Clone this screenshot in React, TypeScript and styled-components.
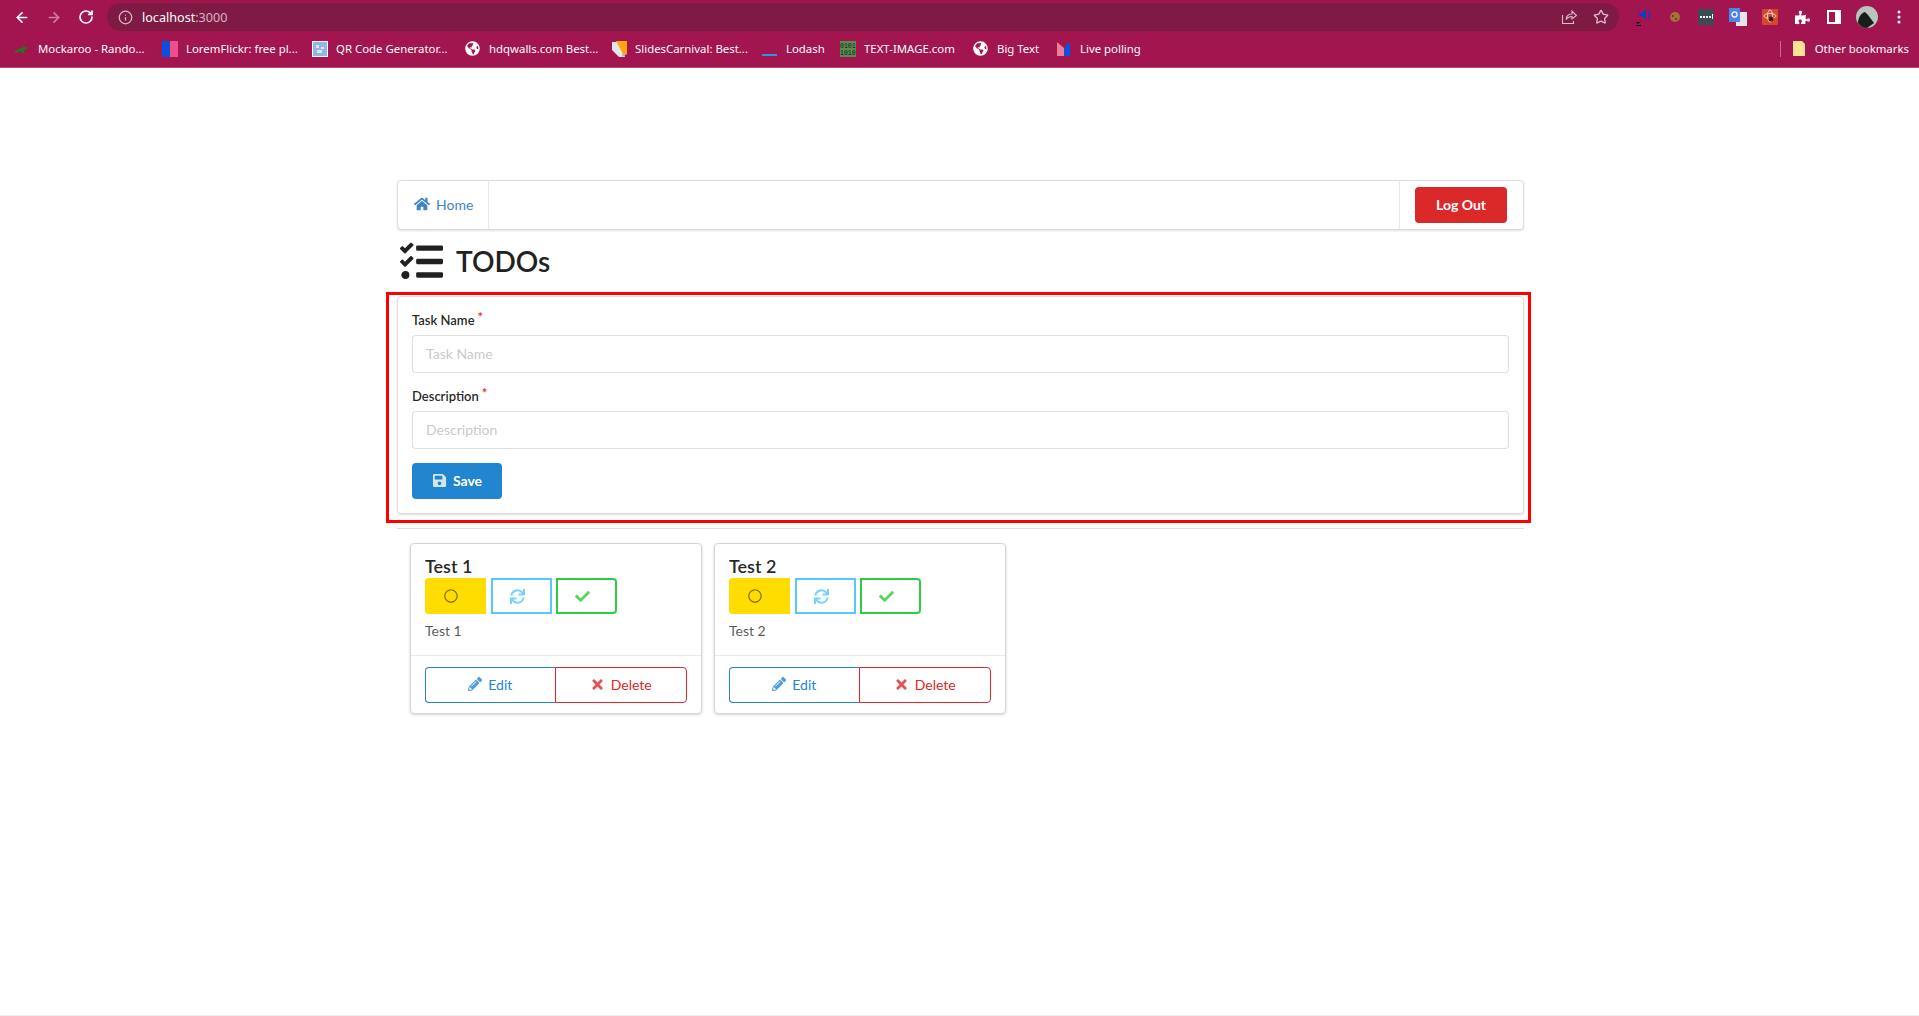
import { ReactNode } from 'react';
import styled, { createGlobalStyle } from 'styled-components';
import {
  FaCheck,
  FaGlobeAmericas,
  FaHome,
  FaPencilAlt,
  FaPuzzlePiece,
  FaRegCircle,
  FaSave,
  FaSync,
  FaTasks,
  FaTimes,
} from 'react-icons/fa';
import { ArrowLeft, ArrowRight, Info, RotateCw, Star } from 'lucide-react';

type TodoType = {
  id: number;
  title: string;
  description: string;
};

const todos: TodoType[] = [
  { id: 1, title: 'Test 1', description: 'Test 1' },
  { id: 2, title: 'Test 2', description: 'Test 2' },
];

const GlobalStyle = createGlobalStyle`
  html, body {
    margin: 0;
    padding: 0;
    background: #fff;
  }
  body {
    font-family: Lato, "Helvetica Neue", Arial, sans-serif;
    font-size: 14px;
    color: rgba(0, 0, 0, 0.87);
  }
  * {
    box-sizing: border-box;
  }
`;

const Page = styled.div`
  display: flex;
  flex-direction: column;
  height: 100vh;
  overflow: hidden;
`;

/* browser chrome */
const Chrome = styled.header`
  flex: none;
  height: 68px;
  background: #a2154f;
  border-bottom: 1px solid #b94a78;
  font-family: "Noto Sans", Arial, sans-serif;
  color: #fff;
`;

const ToolRow = styled.div`
  display: flex;
  align-items: center;
  height: 35px;
  padding: 3px 0 4px 14px;
`;

const NavButton = styled.span<{ $dim?: boolean }>`
  display: flex;
  width: 16px;
  margin-right: 16px;
  color: ${({ $dim }) => ($dim ? '#cf7fa3' : '#fff')};
`;

const AddressBar = styled.div`
  display: flex;
  align-items: center;
  width: 1512px;
  height: 28px;
  margin-left: -3px;
  padding: 0 10px 0 11px;
  border-radius: 14px;
  background: #7f1a45;
  font-size: 12.6px;
`;

const Host = styled.span`
  margin-left: 9px;
  color: #fff;
`;

const Port = styled.span`
  color: #d3b6c3;
`;

const AddressEnd = styled.div`
  display: flex;
  align-items: center;
  gap: 16px;
  margin-left: auto;
  color: #d9bdc9;
`;

const Extensions = styled.div`
  display: flex;
  align-items: center;
  margin-left: 17px;
`;

const ExtensionSlot = styled.span<{ $width: number }>`
  display: flex;
  justify-content: center;
  width: ${({ $width }) => $width}px;
`;

const BookmarkRow = styled.div`
  display: flex;
  align-items: center;
  height: 32px;
  padding: 0 10px 5px 14px;
  font-size: 11.4px;
  white-space: nowrap;
`;

const Bookmark = styled.span<{ $width: number }>`
  display: flex;
  align-items: center;
  gap: 8px;
  width: ${({ $width }) => $width}px;
  flex: none;
`;

const BookmarkIcon = styled.span`
  display: flex;
  width: 16px;
  height: 16px;
  flex: none;
`;

const OtherBookmarks = styled.span`
  display: flex;
  align-items: center;
  gap: 10px;
  margin-left: auto;
  padding-left: 12px;
  border-left: 1px solid #c06d92;
  height: 16px;
`;

const TinyCode = styled.text`
  font-family: "Liberation Mono", monospace;
  font-size: 6.5px;
  fill: #10230f;
`;

/* app */
const Main = styled.main`
  flex: 1;
  padding: 112px 0 0 397px;
  border-bottom: 1px solid #eee;
`;

const Container = styled.div`
  width: 1127px;
`;

const Menu = styled.nav`
  display: flex;
  height: 50px;
  border: 1px solid rgba(34, 36, 38, 0.15);
  border-radius: 4px;
  box-shadow: 0 1px 2px 0 rgba(34, 36, 38, 0.15);
`;

const MenuItem = styled.a`
  display: flex;
  align-items: center;
  gap: 6px;
  padding: 0 15px 2px 16px;
  border-right: 1px solid rgba(34, 36, 38, 0.1);
  color: #4183c4;
`;

const MenuRight = styled.div`
  display: flex;
  align-items: center;
  margin-left: auto;
  padding: 0 16px 0 15px;
  border-left: 1px solid rgba(34, 36, 38, 0.1);
`;

const LogOutButton = styled.button`
  width: 92px;
  height: 36px;
  padding: 0 0 2px;
  border: 0;
  border-radius: 4px;
  background: #db2828;
  color: #fff;
  font: 700 14px Lato, sans-serif;
`;

const HeadingRow = styled.div`
  display: flex;
  align-items: center;
  gap: 13px;
  height: 48px;
  margin: 7px 0 11px;
  padding-left: 3px;
  color: #212121;
`;

const Heading = styled.h1`
  margin: 0;
  font-size: 28px;
  font-weight: 600;
  line-height: 1;
`;

const FormArea = styled.div`
  position: relative;
`;

const Highlight = styled.div`
  position: absolute;
  top: -4px;
  left: -11px;
  right: -7px;
  bottom: -9px;
  border: 3px solid #f00;
  pointer-events: none;
`;

const Segment = styled.form`
  display: flex;
  flex-direction: column;
  align-items: flex-start;
  gap: 14px;
  padding: 14px;
  border: 1px solid rgba(34, 36, 38, 0.15);
  border-radius: 4px;
  box-shadow: 0 1px 2px 0 rgba(34, 36, 38, 0.15);
`;

const Field = styled.div`
  width: 100%;
`;

const Label = styled.label`
  display: block;
  height: 18px;
  margin-bottom: 6px;
  font-size: 13px;
  font-weight: 600;
  line-height: 18px;
  color: rgba(0, 0, 0, 0.87);

  &::after {
    content: '*';
    position: relative;
    top: -3px;
    margin-left: 3px;
    color: #db2828;
  }
`;

const TextInput = styled.input`
  display: block;
  width: 100%;
  height: 38px;
  padding: 0 14px 2px 13px;
  border: 1px solid rgba(34, 36, 38, 0.15);
  border-radius: 4px;
  font: 14px Lato, sans-serif;
  outline: 0;

  &::placeholder {
    color: rgba(191, 191, 191, 0.87);
  }
`;

const SaveButton = styled.button`
  display: flex;
  align-items: center;
  justify-content: center;
  gap: 6px;
  width: 90px;
  height: 36px;
  padding: 0 0 2px;
  border: 0;
  border-radius: 4px;
  background: #2185d0;
  color: #fff;
  font: 700 14px Lato, sans-serif;

  svg {
    opacity: 0.8;
  }
`;

const Divider = styled.hr`
  height: 0;
  margin: 14px 0;
  border: 0;
  border-top: 1px solid rgba(34, 36, 38, 0.15);
`;

const CardList = styled.div`
  display: flex;
  gap: 12px;
  padding-left: 13px;
`;

const Card = styled.article`
  width: 292px;
  height: 171px;
  border: 1px solid #d4d4d5;
  border-radius: 4px;
  box-shadow: 0 1px 3px 0 #d4d4d5;
`;

const CardBody = styled.div`
  padding: 12px 14px 14px;
  height: 112px;
  border-bottom: 1px solid rgba(34, 36, 38, 0.1);
`;

const CardTitle = styled.h3`
  margin: 0 0 2px;
  font-size: 18px;
  font-weight: 600;
  line-height: 20px;
`;

const StatusRow = styled.div`
  display: flex;
  gap: 4.5px;
`;

const StatusButton = styled.button<{ $color: string; $filled?: boolean; $shape: string }>`
  display: flex;
  align-items: center;
  justify-content: center;
  width: 61px;
  height: 36px;
  padding: 0 ${({ $filled }) => ($filled ? 10 : 8)}px 0 0;
  background: ${({ $color, $filled }) => ($filled ? $color : 'transparent')};
  border: 2px solid ${({ $color }) => $color};
  border-radius: ${({ $shape }) => $shape};
  color: ${({ $filled, $color }) => ($filled ? 'rgba(0, 0, 0, 0.48)' : $color)};

  svg {
    opacity: ${({ $filled }) => ($filled ? 1 : 0.8)};
  }
`;

const CardDescription = styled.p`
  margin: 7px 0 0;
  font-size: 14px;
  line-height: 20px;
  color: rgba(0, 0, 0, 0.68);
`;

const CardActions = styled.div`
  display: flex;
  padding: 11px 14px 0;
`;

const ActionButton = styled.button<{ $color: string; $shape: string; $grow: number; $joined?: boolean }>`
  display: flex;
  align-items: center;
  justify-content: center;
  gap: 6px;
  flex: ${({ $grow }) => $grow} 0 0;
  height: 36px;
  padding: 0 0 2px;
  background: #fff;
  border: 1px solid ${({ $color }) => $color};
  border-right-width: ${({ $joined }) => ($joined ? 0 : 1)}px;
  border-radius: ${({ $shape }) => $shape};
  color: ${({ $color }) => $color};
  font: 14px Lato, sans-serif;

  svg {
    opacity: 0.8;
  }
`;

function Favicon({ children }: { children: ReactNode }) {
  return (
    <svg width="16" height="16" viewBox="0 0 16 16">
      {children}
    </svg>
  );
}

const whiteGlobe = <FaGlobeAmericas size={15} color="#fff" />;

const bookmarks: { label: string; width: number; icon: ReactNode }[] = [
  {
    label: 'Mockaroo - Rando...',
    width: 148,
    icon: (
      <Favicon>
        <path d="M1 10c3-1 4-3 7-3l2-2 1 1 4 1-4 1-1 3 1 1H7l1-2-4 1-3 1z" fill="#1f7a1f" />
      </Favicon>
    ),
  },
  {
    label: 'LoremFlickr: free pl...',
    width: 150,
    icon: (
      <Favicon>
        <rect width="8" height="16" fill="#0c50d8" />
        <rect x="8" width="8" height="16" fill="#ee4f8b" />
      </Favicon>
    ),
  },
  {
    label: 'QR Code Generator...',
    width: 153,
    icon: (
      <Favicon>
        <rect width="16" height="16" fill="#fff" />
        <rect x="1" y="1" width="14" height="14" fill="#8fb6ea" />
        <path d="M4 4h3v3H4zM9 6h3v2H9zM5 9h5v3H5z" fill="#dbe8fa" />
      </Favicon>
    ),
  },
  { label: 'hdqwalls.com Best...', width: 146, icon: whiteGlobe },
  {
    label: 'SlidesCarnival: Best...',
    width: 151,
    icon: (
      <Favicon>
        <path d="M1 1h7l6 15H8L1 9z" fill="#e6e6e6" />
        <path d="M5 0h11v13h-4z" fill="#ffa50f" />
        <path d="M11 16l5-3h-5z" fill="#b8b8b8" />
      </Favicon>
    ),
  },
  {
    label: 'Lodash',
    width: 78,
    icon: (
      <Favicon>
        <rect y="13" width="15" height="2" fill="#3492e0" />
      </Favicon>
    ),
  },
  {
    label: 'TEXT-IMAGE.com',
    width: 133,
    icon: (
      <Favicon>
        <rect width="16" height="16" fill="#5c8a55" />
        <TinyCode x="0" y="7">
          0101
        </TinyCode>
        <TinyCode x="0" y="14">
          1010
        </TinyCode>
      </Favicon>
    ),
  },
  { label: 'Big Text', width: 83, icon: whiteGlobe },
  {
    label: 'Live polling',
    width: 90,
    icon: (
      <Favicon>
        <path d="M1 1l7 6v8H1z" fill="#f27b95" />
        <path d="M8 7l6-6v14H8z" fill="#0b52e0" />
      </Favicon>
    ),
  },
];

function BrowserChrome() {
  return (
    <Chrome>
      <ToolRow>
        <NavButton>
          <ArrowLeft size={17} strokeWidth={2.4} />
        </NavButton>
        <NavButton $dim>
          <ArrowRight size={17} strokeWidth={2.4} />
        </NavButton>
        <NavButton>
          <RotateCw size={16} strokeWidth={2.6} />
        </NavButton>
        <AddressBar>
          <Info size={15} color="#d9bdc9" />
          <Host>
            localhost<Port>:3000</Port>
          </Host>
          <AddressEnd>
            <svg width="16" height="16" viewBox="0 0 16 16" fill="none" stroke="currentColor" strokeWidth="1.1">
              <path d="M1.5 6v8.5h11V12" />
              <path d="M5 10.5C5.5 7 8 5 11 5V2l4.5 4.5L11 10V7.5c-2.5 0-4.5 1-6 3z" />
            </svg>
            <Star size={16} strokeWidth={2} />
          </AddressEnd>
        </AddressBar>
        <Extensions>
          <ExtensionSlot $width={16}>
            <svg width="16" height="18" viewBox="0 0 16 18">
              <path d="M3 5h3l4-4v11L6 8H3z" fill="#0b3fc4" />
              <path d="M12 3c2 2 2 5 0 7" stroke="#0b3fc4" strokeWidth="1.4" fill="none" />
              <path d="M0 14h4v-1h1l-3 3-3-3h1zM-1 17h6v1h-6z" fill="#111" />
            </svg>
          </ExtensionSlot>
          <ExtensionSlot $width={46}>
            <svg width="12" height="12" viewBox="0 0 12 12">
              <circle cx="6" cy="6" r="5" fill="#a8703a" />
              <circle cx="4" cy="5" r="1" fill="#5b3413" />
              <circle cx="7" cy="8" r="1" fill="#5b3413" />
            </svg>
          </ExtensionSlot>
          <ExtensionSlot $width={16}>
            <svg width="16" height="16" viewBox="0 0 16 16">
              <rect width="16" height="16" rx="1" fill="#3c4a52" />
              <path d="M2 7h2v2H2zM5 7h2v2H5zM8 7h2v2H8zM11 7h2v2h-2zM14 5h1v5h-1z" fill="#fff" />
            </svg>
          </ExtensionSlot>
          <ExtensionSlot $width={48}>
            <svg width="18" height="18" viewBox="0 0 18 18">
              <rect x="7" y="4" width="11" height="14" fill="#e5e5e5" />
              <path d="M0 0h11v14H0z" fill="#4a86e8" />
              <circle cx="5.5" cy="6.5" r="2.6" fill="none" stroke="#fff" strokeWidth="1.2" />
            </svg>
          </ExtensionSlot>
          <ExtensionSlot $width={16}>
            <svg width="16" height="16" viewBox="0 0 16 16">
              <rect width="16" height="16" rx="1" fill="#d9472b" />
              <ellipse cx="8" cy="7" rx="6" ry="2.5" fill="none" stroke="#f7d7cf" strokeWidth="1" />
              <ellipse cx="8" cy="7" rx="2.5" ry="6" fill="none" stroke="#f7d7cf" strokeWidth="1" />
              <circle cx="9" cy="10" r="2.5" fill="#4a1810" />
            </svg>
          </ExtensionSlot>
          <ExtensionSlot $width={48}>
            <FaPuzzlePiece size={15} color="#fff" />
          </ExtensionSlot>
          <ExtensionSlot $width={16}>
            <svg width="14" height="14" viewBox="0 0 14 14">
              <path d="M0 0h14v14H0z" fill="#fff" />
              <rect x="2" y="2" width="6" height="10" fill="#a2154f" />
            </svg>
          </ExtensionSlot>
          <ExtensionSlot $width={50}>
            <svg width="22" height="22" viewBox="0 0 22 22">
              <circle cx="11" cy="11" r="11" fill="#b8c4be" />
              <path d="M2 17c0-5 3-10 7-11l3 3 6 8-7 5c-4 0-7-2-9-5z" fill="#16201b" />
            </svg>
          </ExtensionSlot>
          <ExtensionSlot $width={14}>
            <svg width="4" height="14" viewBox="0 0 4 14">
              <circle cx="2" cy="2" r="1.5" fill="#fff" />
              <circle cx="2" cy="7" r="1.5" fill="#fff" />
              <circle cx="2" cy="12" r="1.5" fill="#fff" />
            </svg>
          </ExtensionSlot>
        </Extensions>
      </ToolRow>
      <BookmarkRow>
        {bookmarks.map((bookmark) => (
          <Bookmark key={bookmark.label} $width={bookmark.width}>
            <BookmarkIcon>{bookmark.icon}</BookmarkIcon>
            {bookmark.label}
          </Bookmark>
        ))}
        <OtherBookmarks>
          <svg width="12" height="15" viewBox="0 0 12 15">
            <path d="M0 0h9l3 3v12H0z" fill="#fde293" />
          </svg>
          Other bookmarks
        </OtherBookmarks>
      </BookmarkRow>
    </Chrome>
  );
}

function TodoCard({ todo }: { todo: TodoType }) {
  return (
    <Card>
      <CardBody>
        <CardTitle>{todo.title}</CardTitle>
        <StatusRow>
          <StatusButton $color="#ffdd00" $filled $shape="4px 0 0 4px">
            <FaRegCircle size={14} />
          </StatusButton>
          <StatusButton $color="#54c8ff" $shape="0">
            <FaSync size={15} />
          </StatusButton>
          <StatusButton $color="#2ecc40" $shape="0 4px 4px 0">
            <FaCheck size={15} />
          </StatusButton>
        </StatusRow>
        <CardDescription>{todo.description}</CardDescription>
      </CardBody>
      <CardActions>
        <ActionButton $color="#2185d0" $shape="4px 0 0 4px" $grow={130} $joined>
          <FaPencilAlt size={14} />
          Edit
        </ActionButton>
        <ActionButton $color="#db2828" $shape="0 4px 4px 0" $grow={132}>
          <FaTimes size={15} />
          Delete
        </ActionButton>
      </CardActions>
    </Card>
  );
}

export default function App() {
  return (
    <Page>
      <GlobalStyle />
      <BrowserChrome />
      <Main>
        <Container>
          <Menu>
            <MenuItem>
              <FaHome size={16} />
              Home
            </MenuItem>
            <MenuRight>
              <LogOutButton>Log Out</LogOutButton>
            </MenuRight>
          </Menu>
          <HeadingRow>
            <FaTasks size={43} />
            <Heading>TODOs</Heading>
          </HeadingRow>
          <FormArea>
            <Segment>
              <Field>
                <Label>Task Name</Label>
                <TextInput placeholder="Task Name" />
              </Field>
              <Field>
                <Label>Description</Label>
                <TextInput placeholder="Description" />
              </Field>
              <SaveButton type="button">
                <FaSave size={15} />
                Save
              </SaveButton>
            </Segment>
            <Highlight />
          </FormArea>
          <Divider />
          <CardList>
            {todos.map((todo) => (
              <TodoCard key={todo.id} todo={todo} />
            ))}
          </CardList>
        </Container>
      </Main>
    </Page>
  );
}
